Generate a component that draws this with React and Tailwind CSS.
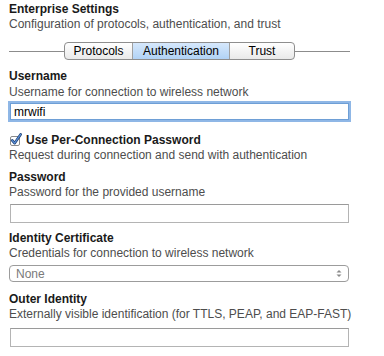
import { useState } from 'react'

const font = { fontFamily: '"Liberation Sans", Arial, sans-serif' }

function Label({ children, className = '' }) {
    return <div className={'h-[14px] leading-[14px] text-[12px] font-bold text-[#1a1a1a] whitespace-nowrap ' + className}>{children}</div>
}

function Desc({ children, className = '' }) {
    return <div className={'h-[14px] leading-[14px] text-[12px] text-[#4d4d4d] whitespace-nowrap ' + className}>{children}</div>
}

export default function App() {
    const [tab, setTab] = useState('Authentication')
    const [user, setUser] = useState('mrwifi')
    const tabs = [
        { name: 'Protocols', w: 'w-[67px]' },
        { name: 'Authentication', w: 'w-[97px]' },
        { name: 'Trust', w: 'w-[65px]' },
    ]

    return (
        <div className="w-[384px] h-[356px] bg-white overflow-hidden" style={font}>
            <div className="pl-[9px] w-[350px]">
                <Label className="mt-[2px]">Enterprise Settings</Label>
                <Desc className="mt-[1px]">Configuration of protocols, authentication, and trust</Desc>

                {/* segmented control */}
                <div className="mt-[11px] flex items-center h-[18px]">
                    <div className="w-[55px] h-px bg-[#8c8c8c]" />
                    <div className="flex h-[18px] border border-[#8e8e8e] rounded-[4px] overflow-hidden bg-gradient-to-b from-white to-[#e9e9e9]">
                        {tabs.map((t, i) => (
                            <button
                                key={t.name}
                                onClick={() => setTab(t.name)}
                                className={
                                    t.w + ' h-full text-[12px] leading-[16px] text-black text-center ' +
                                    (i > 0 ? 'border-l border-[#a0a0a0] ' : '') +
                                    (tab === t.name ? 'bg-gradient-to-b from-[#d6e8fc] to-[#b1d2f5]' : '')
                                }
                            >
                                {t.name}
                            </button>
                        ))}
                    </div>
                    <div className="flex-1 h-px bg-[#8c8c8c]" />
                </div>

                <Label className="mt-[9px]">Username</Label>
                <Desc className="mt-[2px]">Username for connection to wireless network</Desc>
                <input
                    value={user}
                    onChange={e => setUser(e.target.value)}
                    className="mt-[4px] block w-[339px] ml-px h-[17px] px-[3px] text-[12px] text-black border border-[#6e9fd6] shadow-[0_0_0_2px_#8fb7e6] outline-none"
                    style={font}
                />

                <div className="mt-[13px] flex items-center h-[14px]">
                    <svg width="13" height="13" viewBox="0 0 13 13" className="mr-[4px] -mt-[2px]">
                        <rect x="1.5" y="3.5" width="9" height="9" rx="1.5" fill="white" stroke="#8a8a8a" />
                        <path d="M3.2 7.4 L5.6 10.2 L11.6 1.4" fill="none" stroke="#1c3f73" strokeWidth="2.6" strokeLinecap="round" strokeLinejoin="round" />
                        <path d="M3.2 7.4 L5.6 10.2 L11.6 1.4" fill="none" stroke="#5b8fd6" strokeWidth="1.2" strokeLinecap="round" strokeLinejoin="round" />
                    </svg>
                    <span className="text-[12px] leading-[14px] font-bold text-[#1a1a1a]">Use Per-Connection Password</span>
                </div>
                <Desc className="mt-[1px]">Request during connection and send with authentication</Desc>

                <Label className="mt-[8px]">Password</Label>
                <Desc className="mt-[1px]">Password for the provided username</Desc>
                <input
                    type="password"
                    className="mt-[5px] block w-[339px] ml-px h-[19px] border border-[#b4b4b4] border-t-[#9a9a9a] outline-none"
                />

                <Label className="mt-[8px]">Identity Certificate</Label>
                <Desc className="mt-[1px]">Credentials for connection to wireless network</Desc>
                <div className="mt-[5px] flex items-center justify-between w-[340px] h-[17px] border border-[#9c9c9c] rounded-[4px] pl-[6px] pr-[6px] bg-white">
                    <span className="text-[12px] leading-[14px] text-[#7a7a7a]">None</span>
                    <svg width="6" height="9" viewBox="0 0 6 9">
                        <path d="M0.5 3.5 L3 1 L5.5 3.5 Z" fill="#8a8a8a" />
                        <path d="M0.5 5.5 L3 8 L5.5 5.5 Z" fill="#8a8a8a" />
                    </svg>
                </div>

                <Label className="mt-[10px]">Outer Identity</Label>
                <Desc className="mt-[1px]">Externally visible identification (for TTLS, PEAP, and EAP-FAST)</Desc>
                <input
                    className="mt-[7px] block w-[339px] ml-px h-[19px] border border-[#b4b4b4] border-t-[#9a9a9a] outline-none"
                />
            </div>
        </div>
    )
}
